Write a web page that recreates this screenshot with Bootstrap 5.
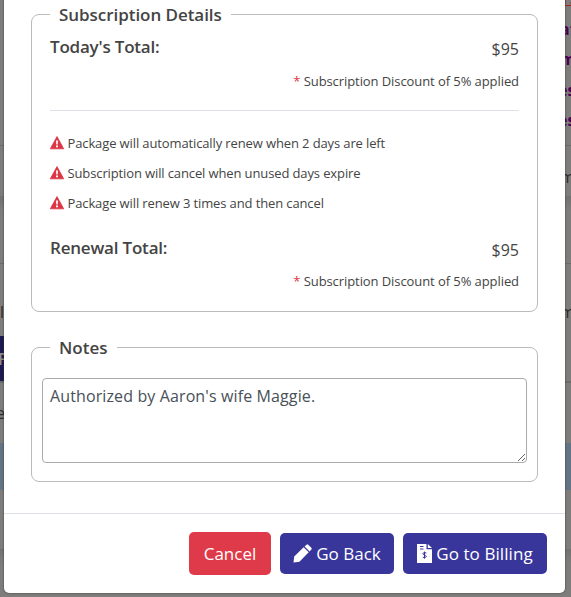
<!DOCTYPE html>
<html lang="en">
<head>
<meta charset="utf-8">
<meta name="viewport" content="width=device-width, initial-scale=1">
<title>Subscription Details</title>
<link href="https://cdn.jsdelivr.net/npm/bootstrap@5.3.0/dist/css/bootstrap.min.css" rel="stylesheet">
<style>
body{font-family:"Open Sans","Noto Sans",sans-serif;color:#444;font-size:16px;line-height:24px;height:597px;overflow:hidden;background:#7f7d7b}
.page-row{height:var(--h);overflow:hidden;line-height:30.6px;color:#292a2f}
.page-row .edge-r{width:11px;white-space:nowrap;overflow:hidden}
.page-row .edge-l{width:4px;white-space:nowrap;overflow:hidden}
.rule{border-bottom:1px solid #6b6b6b}
.shade{background:linear-gradient(#717171,#7f7d7b 14px)}
.visited{color:#4a0050;font-weight:700}
.alert-link-edge{color:#a32020;text-decoration:underline;margin-top:-17px}
.navy{background:#1b194f;color:#8b8b8b;font-weight:600}
.navy span{display:inline-block;margin-left:-2px}
.edge-shift{display:inline-block;margin-left:-4px}
.visited .edge-shift{margin-left:-2px}
.selected{background:#657484}
.dialog{position:absolute;left:4px;top:0;width:561px;height:593px;border-radius:0 0 5px 5px;background:#fff;box-shadow:0 0 2px #333}
.dialog-main{height:514px;padding:14px 27px 0;border-bottom:1px solid #dee2e6}
.panel{border:1px solid #bbb;border-radius:8px}
.panel-sub{height:298px;padding:0 18px}
.panel-notes{height:135px;padding:0 10px;margin-top:35px}
.panel-title{background:#fff;font-size:17px;font-weight:600;line-height:24px;height:24px;margin-top:-12px;padding:0 9px;white-space:nowrap}
.panel-sub .panel-title{width:181px;letter-spacing:-.05px}
.panel-notes .panel-title{width:67px;margin-left:8px}
.total{height:40px;padding-top:8px}
.total-renew{padding-top:18px}
.total-label{font-size:17px;font-weight:600;line-height:24px;letter-spacing:-.2px}
.amount{font-size:16px;line-height:24px;padding-top:2px}
.note{font-size:13px;line-height:20px;margin-top:4px;letter-spacing:-.08px}
.note-renew{margin-top:13px}
.note span{color:#dc3545}
.divider{height:1px;background:#dee2e6;margin:19px 0 17px}
.warn{height:30px;font-size:13px;letter-spacing:-.12px;line-height:20px;white-space:nowrap}
.warn svg{width:14px;height:14px;margin-right:3.5px;flex:none}
.notes-box{height:85px;border:1px solid #aaa;border-radius:4px;padding:5px 7px;font-size:16px;letter-spacing:.12px;line-height:25px;color:#495057;margin-top:18px;resize:both}
.actions{padding:18px 18px 0 0;gap:9px}
.actions .btn{border:0;border-radius:5px;padding:0;height:41px;font-size:17px;line-height:24px;color:#fff;white-space:nowrap}
.actions .btn-cancel{background:#df3a49;height:43px;width:82px}
.btn-main{background:#38369a}
.actions .btn-back{width:114px}
.actions .btn-bill{width:144px;letter-spacing:.08px}
</style>
</head>
<body class="position-relative">
<div class="page-behind">
  <div class="page-row d-flex justify-content-end rule" style="--h:146px">
    <div class="edge-r"><div class="alert-link-edge">15</div><div class="visited">at</div><div class="visited">m</div><div class="visited"><span class="edge-shift">es</span></div><div class="visited"><span class="edge-shift">es</span></div></div>
  </div>
  <div class="page-row d-flex justify-content-end" style="--h:50px"><div class="edge-r pt-3">m</div></div>
  <div class="page-row shade rule" style="--h:68px"></div>
  <div class="page-row d-flex justify-content-between align-items-end" style="--h:72px"><div class="edge-l pb-2">l</div><div class="edge-r pb-2">m</div></div>
  <div class="page-row d-flex align-items-center" style="--h:45px"><div class="edge-l navy h-100 pt-2"><span>F</span></div></div>
  <div class="page-row" style="--h:2px;background:#6b6b6b"></div>
  <div class="page-row d-flex align-items-center" style="--h:60px"><div class="edge-l"><span class="edge-shift">e</span></div></div>
  <div class="page-row selected" style="--h:47px"></div>
  <div class="page-row" style="--h:59px"></div>
  <div class="page-row shade" style="--h:48px"></div>
</div>
<div class="dialog">
  <div class="dialog-main">
    <section class="panel panel-sub">
      <div class="panel-title">Subscription Details</div>
      <div class="total d-flex justify-content-between">
        <div class="total-label">Today's Total:</div>
        <div class="amount">$95</div>
      </div>
      <div class="note text-end"><span>*</span> Subscription Discount of 5% applied</div>
      <div class="divider"></div>
      <div class="warn d-flex align-items-center"><svg viewBox="0 0 14 14"><path d="M7 .6 13.7 12.8H.3Z" fill="#dc3545" stroke="#dc3545" stroke-linejoin="round" stroke-width=".8"/><path d="M6 4.5h2l-.3 4H6.3zM6 9.4h2v1.8H6z" fill="#fff"/></svg><span>Package will automatically renew when 2 days are left</span></div>
      <div class="warn d-flex align-items-center"><svg viewBox="0 0 14 14"><path d="M7 .6 13.7 12.8H.3Z" fill="#dc3545" stroke="#dc3545" stroke-linejoin="round" stroke-width=".8"/><path d="M6 4.5h2l-.3 4H6.3zM6 9.4h2v1.8H6z" fill="#fff"/></svg><span>Subscription will cancel when unused days expire</span></div>
      <div class="warn d-flex align-items-center"><svg viewBox="0 0 14 14"><path d="M7 .6 13.7 12.8H.3Z" fill="#dc3545" stroke="#dc3545" stroke-linejoin="round" stroke-width=".8"/><path d="M6 4.5h2l-.3 4H6.3zM6 9.4h2v1.8H6z" fill="#fff"/></svg><span>Package will renew 3 times and then cancel</span></div>
      <div class="total total-renew d-flex justify-content-between">
        <div class="total-label">Renewal Total:</div>
        <div class="amount">$95</div>
      </div>
      <div class="note note-renew text-end"><span>*</span> Subscription Discount of 5% applied</div>
    </section>
    <section class="panel panel-notes">
      <div class="panel-title">Notes</div>
      <textarea class="notes-box d-block w-100" aria-label="Notes">Authorized by Aaron's wife Maggie.</textarea>
    </section>
  </div>
  <div class="actions d-flex justify-content-end align-items-center">
    <button class="btn btn-cancel" type="button">Cancel</button>
    <button class="btn btn-main btn-back d-flex align-items-center justify-content-center gap-1" type="button"><svg width="19" height="19" viewBox="0 0 20 20" fill="#fff"><path d="M.5 19.5l.8-6.3L11.2 3.5l5.3 5.3L6.8 18.6Z"/><path d="M12.2 2.5 14.2.7q.9-.7 1.8 0l3.3 3.3q.8.9 0 1.8l-1.8 2Z"/></svg><span>Go Back</span></button>
    <button class="btn btn-main btn-bill d-flex align-items-center justify-content-center gap-1" type="button"><svg width="15" height="19" viewBox="0 0 15 19"><path d="M0 0h9.5v5.2H15V19H0Z" fill="#fff"/><path d="M10.8 0 15 4.1h-4.2Z" fill="#fff"/><path d="M3 2.5H6.5M3 5H6.5" stroke="#38369a" stroke-width="1"/><path d="M9.4 9Q7.5 8.3 6.2 9c-.9.9.1 1.6 1.4 2 1.4.4 2.3 1.4 1.2 2.2q-1.5.8-3 0M7.5 7.6v7" fill="none" stroke="#38369a" stroke-width="1"/></svg><span>Go to Billing</span></button>
  </div>
</div>
<script src="https://cdn.jsdelivr.net/npm/bootstrap@5.3.0/dist/js/bootstrap.bundle.min.js"></script>
</body>
</html>
